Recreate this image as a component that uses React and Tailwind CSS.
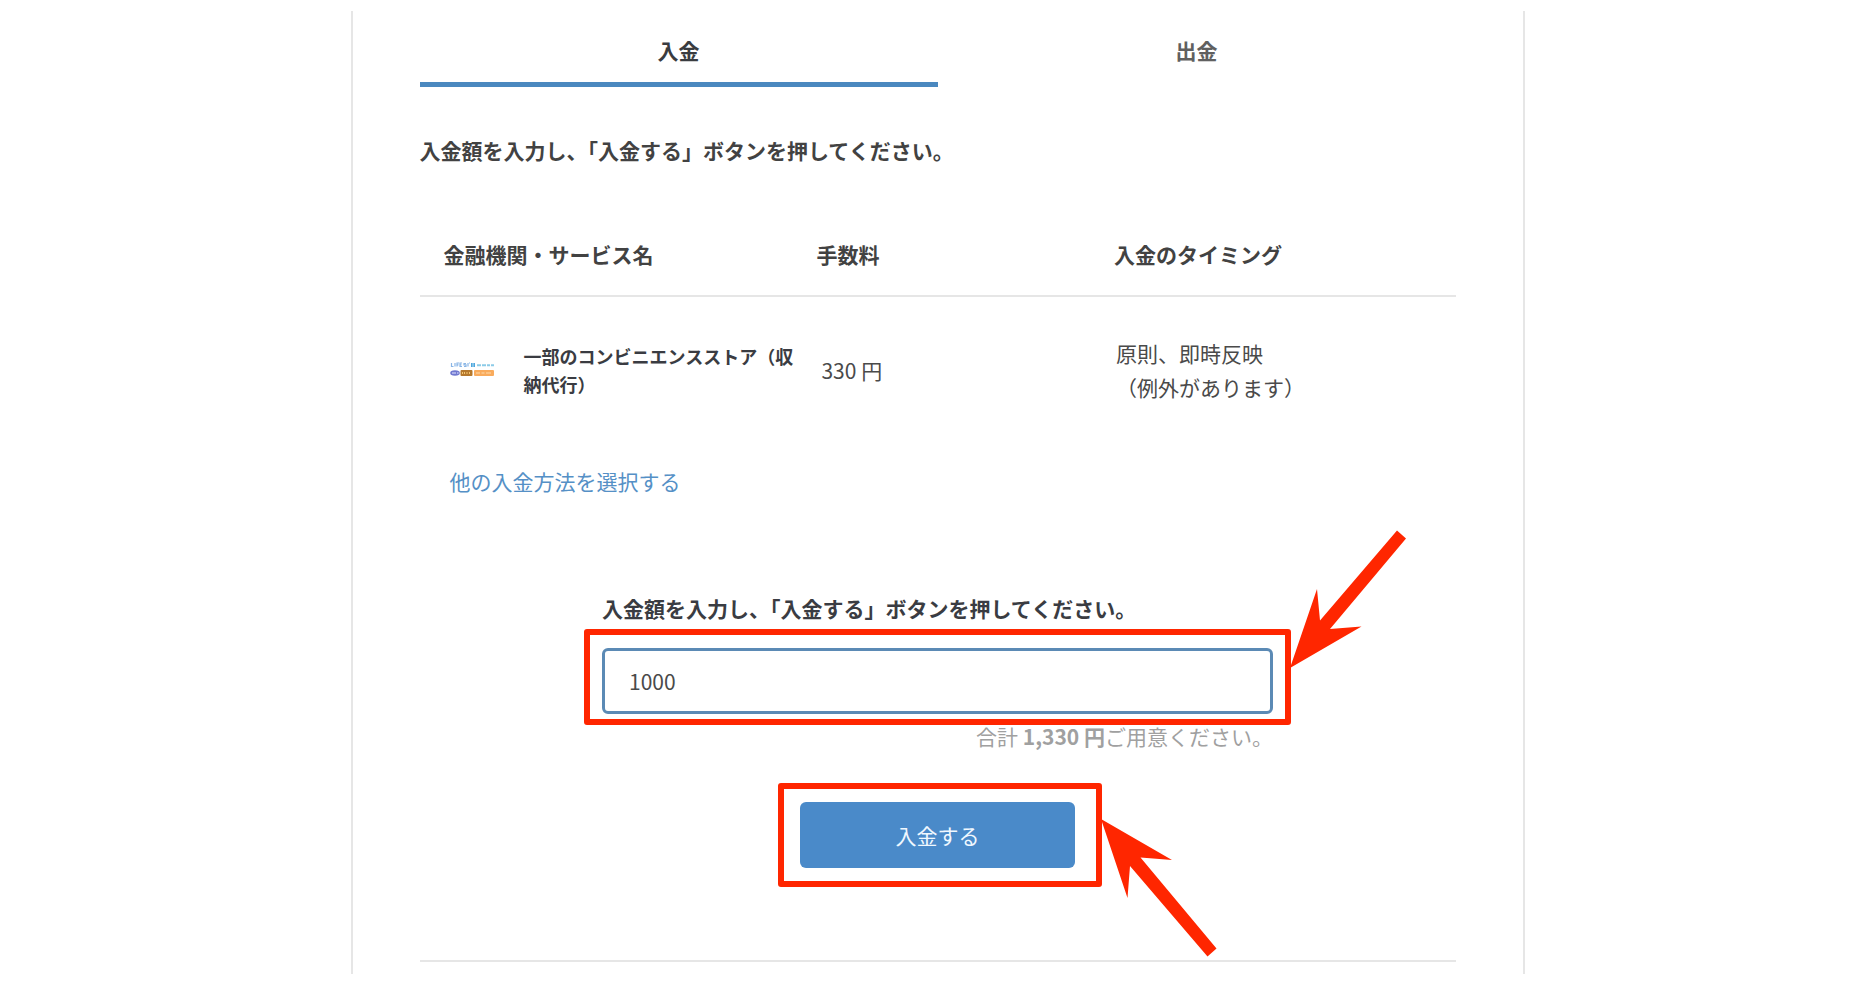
import { useState } from "react";

const GUIDE = "入金額を入力し、「入金する」ボタンを押してください。";
const FEE = 330;

const tabs = [
  { key: "deposit", label: "入金" },
  { key: "withdraw", label: "出金" },
];

// small strip with the supported store brands
function StoreLogos() {
  return (
    <svg
      viewBox="0 0 46 16"
      className="h-4 w-[46px] shrink-0"
      role="img"
      aria-label="コンビニエンスストア"
    >
      <g fill="none" strokeWidth="1.2">
        <path d="M1.5 1v3.5h2M5 1v3.5M7 4.5v-3.500h2M7 2.800h1.500M12 1h-2v3.500h2M10 2.800h1.500M16 1.500h-2v1.300h2v1.700h-2M18 1v3.500M20 1h-1" stroke="#8ab6e6" />
        <path d="M27 3.200h4M32 3.200h4M37 3.200h3M41 3.200h3" stroke="#8ccbe8" strokeWidth="2" />
      </g>
      <rect x="21" y="1" width="4" height="4" fill="#4fa6dc" />
      <rect x="22.500" y="1" width="1" height="4" fill="#b9e1f5" />
      <ellipse cx="5" cy="11" rx="4.800" ry="2.800" fill="#7078d0" />
      <path d="M2 11h2M5 10v2M7 11h1.500" stroke="#e4e6ff" strokeWidth="1" />
      <rect x="10.500" y="8" width="12" height="6" rx="1" fill="#b5782c" />
      <path d="M12.500 10v2M14.500 10v2M16 11h2M19.500 10v2" stroke="#f3c572" strokeWidth="1" />
      <rect x="24" y="8" width="20" height="6" rx="1" fill="#f9ab5c" />
      <path d="M26 11h4M31.500 11h3M36 11h5" stroke="#fddcae" strokeWidth="1" />
    </svg>
  );
}

function ArrowDown() {
  return (
    <svg
      viewBox="0 0 116 138"
      className="pointer-events-none absolute -top-[118px] left-full ml-[17px] h-[138px] w-[116px]"
      aria-hidden="true"
    >
      <path d="M0 138 27 59l3 31.500L107 0.500l9 8L40 99l31.500-2.500z" fill="#ff2600" />
    </svg>
  );
}

function ArrowUp() {
  return (
    <svg
      viewBox="0 0 116 138"
      className="pointer-events-none absolute top-[17px] left-full ml-[26px] h-[138px] w-[116px]"
      aria-hidden="true"
    >
      <path d="M0 0 71 41l-31.500-2.500L115.500 129.500l-9 8L29 47l-2.500 32z" fill="#ff2600" />
    </svg>
  );
}

export default function App() {
  const [tab, setTab] = useState("deposit");
  const [amount, setAmount] = useState("1000");

  const total = (Number(amount) || 0) + FEE;

  return (
    <main
      lang="ja"
      className="bg-white pt-[11px] pb-[10px] font-['Noto_Sans_CJK_JP',sans-serif] text-[21px] leading-8 text-[#4a4a4a]"
    >
      <div className="mx-auto max-w-[1174px] border-x-2 border-[#e6e6e6] px-[67px] pb-3">
        <div role="tablist" className="grid grid-cols-2">
          {tabs.map(({ key, label }) => (
            <button
              key={key}
              type="button"
              role="tab"
              aria-selected={tab === key}
              onClick={() => setTab(key)}
              className={
                tab === key
                  ? "border-b-[5px] border-[#4a88bf] pt-[23px] pb-4 font-bold text-[#3a3c40]"
                  : "border-b-[5px] border-transparent pt-[23px] pb-4 font-bold text-[#606060]"
              }
            >
              {label}
            </button>
          ))}
        </div>

        <p className="mt-[47px] font-bold text-[#424242]">{GUIDE}</p>

        <table className="mt-12 w-full table-fixed text-left">
          <thead>
            <tr className="border-b-2 border-[#e6e6e6] text-[#424242]">
              <th className="w-[36%] pt-6 pb-[25px] pl-6 font-bold">金融機関・サービス名</th>
              <th className="w-[29%] pt-6 pb-[25px] pl-6 font-bold">手数料</th>
              <th className="pt-6 pb-[25px] pl-[21px] font-bold">入金のタイミング</th>
            </tr>
          </thead>
          <tbody>
            <tr>
              <td className="pt-[39px] pb-10 pl-[30px]">
                <div className="flex items-center gap-7">
                  <StoreLogos />
                  <span className="w-[270px] shrink-0 text-lg leading-7 font-bold text-[#3a3c42]">
                    一部のコンビニエンスストア（収納代行）
                  </span>
                </div>
              </td>
              <td className="pt-[39px] pb-10 pl-[29px]">{FEE} 円</td>
              <td className="pt-[39px] pb-10 pl-[23px] leading-[34px]">
                原則、即時反映
                <br />
                （例外があります）
              </td>
            </tr>
          </tbody>
        </table>

        <a href="#methods" className="mt-[21px] ml-[30px] inline-block text-[#5590c6]">
          他の入金方法を選択する
        </a>

        <form
          onSubmit={(e) => e.preventDefault()}
          className="mx-auto mt-[95px] max-w-[671px]"
        >
          <label htmlFor="amount" className="block font-bold text-[#3a3c42]">
            {GUIDE}
          </label>

          <div className="relative mt-6">
            <input
              id="amount"
              type="text"
              inputMode="numeric"
              value={amount}
              onChange={(e) => setAmount(e.target.value)}
              className="block h-[66px] w-full rounded-md border-3 border-[#5b8ab5] bg-white px-6 text-[#4a4a4a] outline-none"
            />
            <div className="pointer-events-none absolute -top-[19px] -right-[18px] -bottom-[11px] -left-[18px] rounded-[3px] border-6 border-[#ff2600]" />
            <ArrowDown />
          </div>

          <p className="mt-[6px] text-right text-[#a0a0a0]">
            合計 <b className="font-bold">{total.toLocaleString("ja-JP")} 円</b>
            ご用意ください。
          </p>

          <div className="relative mx-auto mt-[50px] w-[275px]">
            <button
              type="submit"
              className="block h-[66px] w-full rounded-md bg-[#4a8ac9] text-[#f0f8ff]"
            >
              入金する
            </button>
            <div className="pointer-events-none absolute -top-[19px] -right-[27px] -bottom-[19px] -left-[22px] rounded-[3px] border-6 border-[#ff2600]" />
            <ArrowUp />
          </div>
        </form>

        <hr className="mt-[92px] border-t-2 border-[#e6e6e6]" />
      </div>
    </main>
  );
}
